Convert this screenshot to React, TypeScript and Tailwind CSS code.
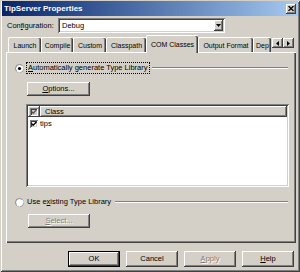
const font = "font-['Liberation_Sans',Arial,sans-serif]"
const raised =
  "shadow-[inset_-1px_-1px_0_#404040,inset_1px_1px_0_#fff,inset_-2px_-2px_0_#808080]"
const sunken =
  "shadow-[inset_1px_1px_0_#808080,inset_-1px_-1px_0_#fff,inset_2px_2px_0_#404040,inset_-2px_-2px_0_#d4d0c8]"

function Radio({ checked }: { checked?: boolean }) {
  return (
    <svg width="9" height="9" viewBox="0 0 9 9" className="shrink-0">
      <circle cx="4.5" cy="4.5" r="4" fill="#fff" stroke="#808080" />
      <path d="M1.7 7.3 A4 4 0 0 0 7.3 1.7" fill="none" stroke="#fff" />
      {checked && <circle cx="4.5" cy="4.5" r="1.6" fill="#000" />}
    </svg>
  )
}

function Check({ gray }: { gray?: boolean }) {
  return (
    <div className={`w-[8px] h-[8px] ${gray ? "bg-[#d4d0c8]" : "bg-white"} ${sunken} flex items-center justify-center`}>
      <svg width="6" height="6" viewBox="0 0 6 6">
        <path d="M0.5 2.5 L2.2 4.3 L5.5 0.8" fill="none" stroke={gray ? "#555" : "#000"} strokeWidth="1.3" />
      </svg>
    </div>
  )
}

function Btn({ children, w, disabled, def }: { children: React.ReactNode; w: string; disabled?: boolean; def?: boolean }) {
  return (
    <div
      className={`${w} h-full flex items-center justify-center bg-[#d4d0c8] ${
        def ? "border border-black" : ""
      }`}
    >
      <div className={`w-full h-full flex items-center justify-center ${raised}`}>
        <span
          className={`text-[7.5px] leading-none ${
            disabled ? "text-[#808080] [text-shadow:1px_1px_0_#fff]" : "text-black"
          }`}
        >
          {children}
        </span>
      </div>
    </div>
  )
}

const tabs = [
  { name: "Launch", w: "w-[33px]" },
  { name: "Compile", w: "w-[32px]" },
  { name: "Custom", w: "w-[33px]" },
  { name: "Classpath", w: "w-[40px]" },
  { name: "COM Classes", w: "w-[52px]", active: true },
  { name: "Output Format", w: "w-[55px]" },
  { name: "Dep", w: "w-[18px]" },
]

function Etched({ className }: { className: string }) {
  return <div className={`h-[2px] border-t border-t-[#808080] border-b border-b-white ${className}`} />
}

export default function App() {
  return (
    <div
      className={`w-[300px] h-[272px] bg-[#d4d0c8] flex flex-col ${font} text-black shadow-[inset_1px_1px_0_#d4d0c8,inset_-1px_-1px_0_#404040,inset_2px_2px_0_#fff,inset_-2px_-2px_0_#808080]`}
    >
      {/* title bar */}
      <div className="mx-[2px] mt-[1px] h-[15px] flex items-center bg-linear-to-r from-[#0a246a] to-[#a6caf0] pl-[2px] pr-[2px]">
        <span className="text-white font-bold text-[8px] leading-none">TipServer Properties</span>
        <div className={`ml-auto w-[10px] h-[10px] bg-[#d4d0c8] ${raised} flex items-center justify-center`}>
          <svg width="6" height="5" viewBox="0 0 6 5">
            <path d="M0.5 0 L5.5 5 M5.5 0 L0.5 5" stroke="#000" strokeWidth="1.3" />
          </svg>
        </div>
      </div>

      {/* configuration */}
      <div className="mt-[2px] h-[15px] flex items-center pl-[7px]">
        <span className="w-[51px] text-[7.5px] leading-none">
          Con<span className="underline">f</span>iguration:
        </span>
        <div className={`w-[167px] h-full bg-white ${sunken} flex items-center pl-[4px] pr-[2px]`}>
          <span className="text-[7.5px] leading-none">Debug</span>
          <div className={`ml-auto w-[9px] h-[11px] bg-[#d4d0c8] ${raised} flex items-center justify-center`}>
            <svg width="5" height="3" viewBox="0 0 5 3">
              <path d="M0 0 H5 L2.5 3 Z" fill="#000" />
            </svg>
          </div>
        </div>
      </div>

      {/* tabs */}
      <div className="mt-[2px] h-[17px] flex items-end">
        <div className="ml-[8px] w-[264px] h-full flex items-end">
          {tabs.map((t) =>
            t.active ? (
              <div
                key={t.name}
                className={`${t.w} shrink-0 h-[18px] -mb-[1px] relative z-10 bg-[#d4d0c8] border-l border-t border-white rounded-t-[2px] shadow-[inset_-1px_0_0_#404040,inset_-2px_0_0_#808080] flex items-center justify-center`}
              >
                <span className="text-[7px] leading-none whitespace-nowrap">{t.name}</span>
              </div>
            ) : (
              <div
                key={t.name}
                className={`${t.w} shrink-0 h-[15px] border-l border-t border-white rounded-t-[2px] shadow-[inset_-1px_0_0_#404040,inset_-2px_0_0_#808080] flex items-center ${
                  t.name === "Dep" ? "pl-[2px]" : "justify-center"
                }`}
              >
                <span className="text-[7px] leading-none whitespace-nowrap">{t.name}</span>
              </div>
            )
          )}
        </div>
        <div className="flex mb-[4px]">
          {["left", "right"].map((d) => (
            <div key={d} className={`w-[11px] h-[10px] bg-[#d4d0c8] ${raised} flex items-center justify-center`}>
              <svg width="3" height="5" viewBox="0 0 3 5">
                <path d={d === "left" ? "M3 0 V5 L0 2.5 Z" : "M0 0 V5 L3 2.5 Z"} fill="#000" />
              </svg>
            </div>
          ))}
        </div>
      </div>

      {/* page */}
      <div className="ml-[6px] w-[290px] h-[191px] border-t border-l border-white shadow-[inset_-1px_-1px_0_#404040,inset_-2px_-2px_0_#808080] flex flex-col">
        <div className="mt-[9px] h-[12px] flex items-center pl-[8px] pr-[8px]">
          <Radio checked />
          <div className="ml-[2px] h-full px-[1px] border border-dotted border-black flex items-center">
            <span className="text-[7.5px] leading-none whitespace-nowrap">
              <span className="underline">A</span>utomatically generate Type Library
            </span>
          </div>
          <Etched className="ml-[2px] flex-1" />
        </div>

        <div className="mt-[8px] ml-[20px] h-[14px]">
          <Btn w="w-[63px]">
            <span className="underline">O</span>ptions...
          </Btn>
        </div>

        <div className={`mt-[8px] ml-[19px] w-[263px] h-[83px] bg-white ${sunken} p-[2px] flex flex-col`}>
          <div className="h-[11px] flex bg-[#d4d0c8]">
            <div className={`w-[12px] h-full ${raised} flex items-center justify-center`}>
              <Check gray />
            </div>
            <div className={`flex-1 h-full ${raised} flex items-center pl-[5px]`}>
              <span className="text-[7.5px] leading-none">Class</span>
            </div>
          </div>
          <div className="mt-[2px] h-[9px] flex items-center pl-[2px]">
            <Check />
            <span className="ml-[2px] text-[7.5px] leading-none">tips</span>
          </div>
        </div>

        <div className="mt-[9px] h-[12px] flex items-center pl-[8px] pr-[8px]">
          <Radio />
          <span className="ml-[3px] text-[7.5px] leading-none whitespace-nowrap">
            Use e<span className="underline">x</span>isting Type Library
          </span>
          <Etched className="ml-[4px] flex-1" />
        </div>

        <div className="mt-[6px] ml-[21px] h-[14px]">
          <Btn w="w-[62px]" disabled>
            <span className="underline">S</span>elect...
          </Btn>
        </div>
      </div>

      {/* buttons */}
      <div className="mt-[8px] h-[16px] flex justify-end gap-[6px] pr-[6px]">
        <Btn w="w-[52px]" def>
          OK
        </Btn>
        <Btn w="w-[52px]">Cancel</Btn>
        <Btn w="w-[52px]" disabled>
          <span className="underline">A</span>pply
        </Btn>
        <Btn w="w-[52px]">
          <span className="underline">H</span>elp
        </Btn>
      </div>
    </div>
  )
}
